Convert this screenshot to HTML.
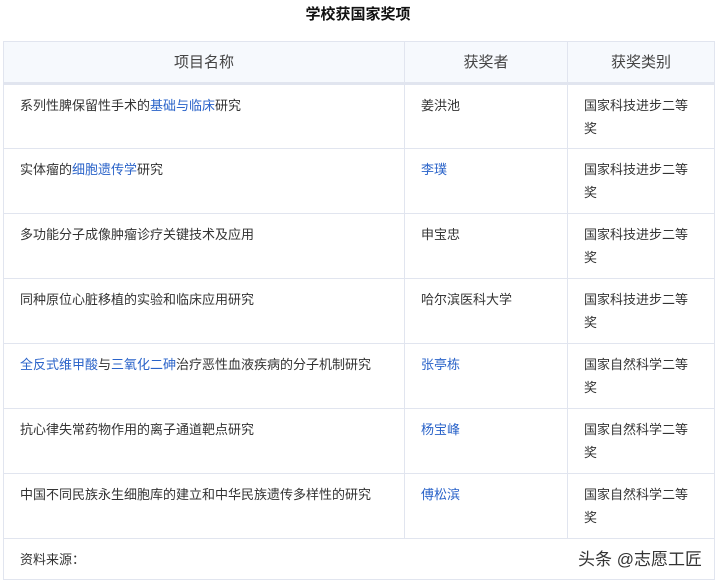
<!DOCTYPE html>
<html><head><meta charset="utf-8"><style>
body{margin:0;background:#fff;font-family:"Liberation Sans","Noto Sans CJK SC",sans-serif;color:#333;width:716px;height:585px;overflow:hidden;position:relative}
.t{position:absolute;top:5px;left:0;width:716px;text-align:center;font-weight:bold;font-size:15px;color:#111;line-height:20px}
table{position:absolute;left:3px;top:41px;border-collapse:collapse;width:711px;table-layout:fixed}
td,th{border:1px solid #e1e5ef;font-size:13px;vertical-align:top;padding:0;line-height:23px}
th{background:#f6f9fd;font-weight:normal;font-size:15px;height:40px;text-align:center;vertical-align:middle;border-bottom:3px solid #e1e5ef;color:#444}
td{height:65px;padding-top:9px;box-sizing:border-box}
td.a{padding-left:16px}td.b{padding-left:16px}td.c{padding-left:16px;padding-right:14px}
a{color:#2a63c9;text-decoration:none}
td.f{height:41px;padding-top:9px;padding-left:16px;position:relative}
.w{position:absolute;right:12px;top:9px;font-size:17px;color:#333}
</style></head><body>
<div class="t">学校获国家奖项</div>
<table>
<colgroup><col style="width:401px"><col style="width:163px"><col style="width:147px"></colgroup>
<tr><th>项目名称</th><th>获奖者</th><th>获奖类别</th></tr>
<tr><td class="a">系列性脾保留性手术的<a>基础与临床</a>研究</td><td class="b">姜洪池</td><td class="c">国家科技进步二等奖</td></tr>
<tr><td class="a">实体瘤的<a>细胞遗传学</a>研究</td><td class="b"><a>李璞</a></td><td class="c">国家科技进步二等奖</td></tr>
<tr><td class="a">多功能分子成像肿瘤诊疗关键技术及应用</td><td class="b">申宝忠</td><td class="c">国家科技进步二等奖</td></tr>
<tr><td class="a">同种原位心脏移植的实验和临床应用研究</td><td class="b">哈尔滨医科大学</td><td class="c">国家科技进步二等奖</td></tr>
<tr><td class="a"><a>全反式维甲酸</a>与<a>三氧化二砷</a>治疗恶性血液疾病的分子机制研究</td><td class="b"><a>张亭栋</a></td><td class="c">国家自然科学二等奖</td></tr>
<tr><td class="a">抗心律失常药物作用的离子通道靶点研究</td><td class="b"><a>杨宝峰</a></td><td class="c">国家自然科学二等奖</td></tr>
<tr><td class="a">中国不同民族永生细胞库的建立和中华民族遗传多样性的研究</td><td class="b"><a>傅松滨</a></td><td class="c">国家自然科学二等奖</td></tr>
<tr><td class="f" colspan="3">资料来源：<span class="w">头条 @志愿工匠</span></td></tr>
</table>
</body></html>
